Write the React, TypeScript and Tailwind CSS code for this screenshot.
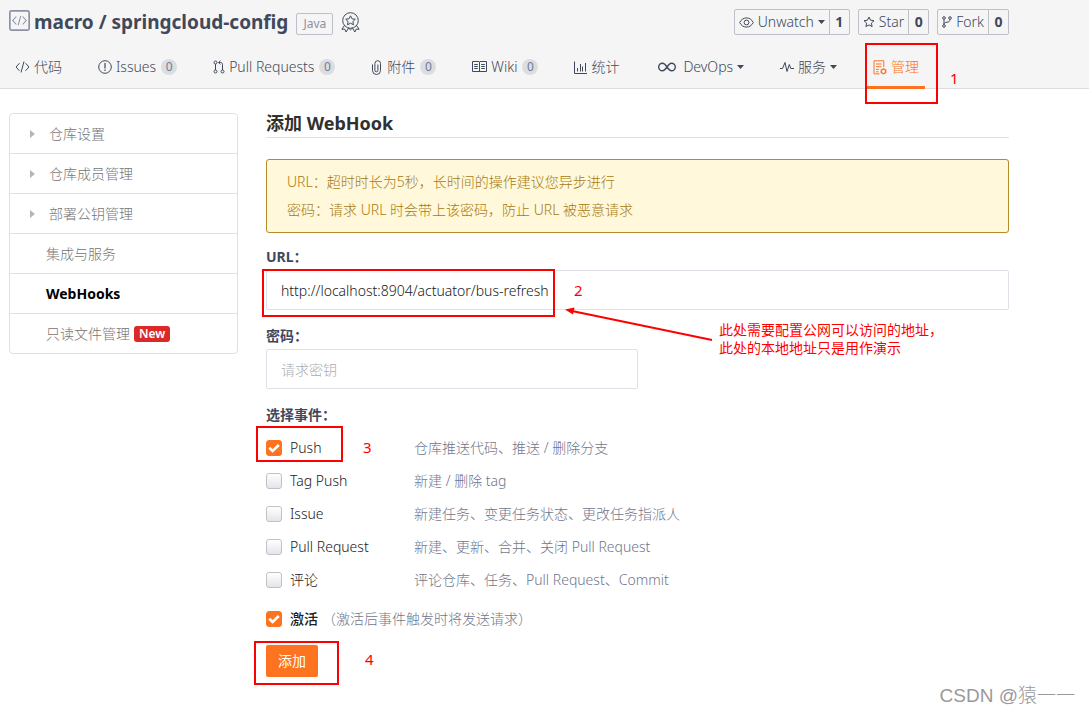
import React, { FC, ReactNode, SVGProps, useState } from "react";
import clsx from "clsx";

const Icon: FC<SVGProps<SVGSVGElement>> = ({ children, ...props }) => (
  <svg
    fill="none"
    stroke="currentColor"
    strokeWidth={1}
    aria-hidden="true"
    {...props}
  >
    {children}
  </svg>
);

const CodeIcon = () => (
  <Icon width={15} height={14} viewBox="0 0 15 14">
    <path d="M4.5 3.2 1 7l3.5 3.8M10.5 3.2 14 7l-3.5 3.8M9 1.5l-3 11" />
  </Icon>
);

const RepoIcon = () => (
  <Icon width={21} height={21} viewBox="0 0 20 20" className="-mt-1 shrink-0 text-[#8c92a4]">
    <rect x="0.8" y="0.8" width="18.4" height="18.4" rx="1.5" strokeWidth={1.6} />
    <path d="M7 6.2 3.6 10 7 13.8M13 6.2l3.4 3.8-3.4 3.8M11.2 5.5l-2.4 9" />
  </Icon>
);

const MedalIcon = () => (
  <Icon width={19} height={21} viewBox="0 0 19 21" className="shrink-0">
    <circle cx="9.5" cy="8.5" r="7.8" />
    <path d="m9.5 3.8 1.5 3 3.3.4-2.4 2.3.6 3.3-3-1.6-3 1.6.6-3.3-2.4-2.3 3.3-.4z" />
    <path d="M3.4 13.5.9 17.3l2.8-.2 1.4 2.9 2.5-4M15.6 13.5l2.5 3.8-2.8-.2-1.4 2.9-2.5-4M7.5 16l2 1.8 2-1.8" />
  </Icon>
);

const IssueIcon = () => (
  <Icon width={14} height={14} viewBox="0 0 14 14">
    <circle cx="7" cy="7" r="6.3" />
    <path d="M7 3v5.4M7 9.6V11" strokeWidth={1.2} />
  </Icon>
);

const PullIcon = () => (
  <Icon width={12} height={14} viewBox="0 0 12 14">
    <circle cx="2.5" cy="2.5" r="1.5" />
    <circle cx="2.5" cy="11.5" r="1.5" />
    <circle cx="9.5" cy="11.5" r="1.5" />
    <path d="M2.5 4v6M9.500 10V4.500c0-1.200-.7-2-1.800-2H5.500M7.500.8 5.700 2.500l1.800 1.800" />
  </Icon>
);

const ClipIcon = () => (
  <Icon width={12} height={15} viewBox="0 0 12 15">
    <path d="M1.5 4.5v6a4 4 0 0 0 8 0v-7a2.800 2.800 0 0 0-5.600 0v6.800a1.500 1.500 0 0 0 3 0V4.500" />
  </Icon>
);

const WikiIcon = () => (
  <Icon width={15} height={12} viewBox="0 0 15 12">
    <path d="M.5.5H7l.5.5.5-.5h6.500v10H8l-.5.500-.5-.500H.5zM7.500 1v10" />
    <path d="M2.200 3.500h3.600M2.200 5.500h3.600M2.200 7.500h3.600M9.200 3.500h3.600M9.200 5.500h3.600M9.200 7.500h3.600" />
  </Icon>
);

const ChartIcon = () => (
  <Icon width={13} height={13} viewBox="0 0 13 13">
    <path d="M.5.5v12H13M3.500 10.500V7M6.500 10.500V3M8.500 10.500V5.500M11.500 10.500V2" />
  </Icon>
);

const InfinityIcon = () => (
  <Icon width={24} height={10} viewBox="-3 0 24 10" strokeWidth={1.4}>
    <path d="M9 5C7.400 2.600 6.300 1.200 4.500 1.200a3.800 3.800 0 0 0 0 7.600C6.300 8.800 7.400 7.400 9 5s2.700-3.800 4.500-3.800a3.800 3.800 0 0 1 0 7.600C11.700 8.800 10.600 7.400 9 5z" />
  </Icon>
);

const PulseIcon = () => (
  <Icon width={14} height={12} viewBox="0 0 14 12">
    <path d="M0 7.500h2.500L5 1.500l2 9 2.300-7 1.500 4H14" />
  </Icon>
);

const ManageIcon = () => (
  <Icon width={14} height={15} viewBox="0 0 14 15">
    <path d="M6.500 13.900H1V.8h9.800v6.200M3 4h5.600M3 6.700h5.600M3 9.400h3M3 11.800h2.500" />
    <path d="m10.500 8.800 2.200 1.250v2.500l-2.200 1.250-2.200-1.250v-2.500z" strokeWidth={1.4} />
  </Icon>
);

const EyeIcon = () => (
  <Icon width={15} height={11} viewBox="0 0 15 11">
    <path d="M.7 5.500C2.300 2.500 4.600.9 7.500.9s5.200 1.600 6.800 4.600c-1.600 3-3.900 4.600-6.800 4.600S2.300 8.500.7 5.500z" />
    <circle cx="7.500" cy="5.500" r="2.400" />
  </Icon>
);

const StarIcon = () => (
  <Icon width={12} height={12} viewBox="0 0 12 12">
    <path d="m6 1 1.500 3.200 3.500.5-2.600 2.400.7 3.500L6 8.900l-3.100 1.700.7-3.500L1 4.700l3.500-.5z" />
  </Icon>
);

const ForkIcon = () => (
  <Icon width={10} height={12} viewBox="0 0 10 12">
    <circle cx="2" cy="2" r="1.300" />
    <circle cx="8" cy="2" r="1.300" />
    <circle cx="2" cy="10" r="1.300" />
    <path d="M2 3.300v5.400M8 3.300c0 2.400-1.200 2.600-3 2.900-1.800.2-3 .5-3 2.200" />
  </Icon>
);

const Caret = () => (
  <svg width="7" height="4" viewBox="0 0 7 4" fill="currentColor" aria-hidden="true">
    <path d="M0 0h7L3.500 4z" />
  </svg>
);

interface NavItem {
  label: string;
  icon: ReactNode;
  count?: number;
  dropdown?: boolean;
  active?: boolean;
}

const navItems: NavItem[] = [
  { label: "代码", icon: <CodeIcon /> },
  { label: "Issues", icon: <IssueIcon />, count: 0 },
  { label: "Pull Requests", icon: <PullIcon />, count: 0 },
  { label: "附件", icon: <ClipIcon />, count: 0 },
  { label: "Wiki", icon: <WikiIcon />, count: 0 },
  { label: "统计", icon: <ChartIcon /> },
  { label: "DevOps", icon: <InfinityIcon />, dropdown: true },
  { label: "服务", icon: <PulseIcon />, dropdown: true },
  { label: "管理", icon: <ManageIcon />, active: true },
];

const repoActions = [
  { label: "Unwatch", icon: <EyeIcon />, count: 1, dropdown: true },
  { label: "Star", icon: <StarIcon />, count: 0 },
  { label: "Fork", icon: <ForkIcon />, count: 0 },
];

const sideItems = [
  { label: "仓库设置", expandable: true },
  { label: "仓库成员管理", expandable: true },
  { label: "部署公钥管理", expandable: true },
  { label: "集成与服务" },
  { label: "WebHooks", active: true },
  { label: "只读文件管理", isNew: true },
];

const hookEvents = [
  { id: "push", label: "Push", desc: "仓库推送代码、推送 / 删除分支" },
  { id: "tag", label: "Tag Push", desc: "新建 / 删除 tag" },
  { id: "issue", label: "Issue", desc: "新建任务、变更任务状态、更改任务指派人" },
  { id: "pr", label: "Pull Request", desc: "新建、更新、合并、关闭 Pull Request" },
  { id: "note", label: "评论", desc: "评论仓库、任务、Pull Request、Commit" },
];

// Red frame drawn around a step, with its number beside it
const Step: FC<{ num: number; frame: string; text: string }> = ({
  num,
  frame,
  text,
}) => (
  <>
    <span
      className={clsx("pointer-events-none absolute border-2 border-[#f00]", frame)}
    />
    <span
      className={clsx(
        "pointer-events-none absolute text-[15px] leading-5 font-normal text-[#f00]",
        text,
      )}
    >
      {num}
    </span>
  </>
);

interface CheckboxProps {
  id: string;
  label: string;
  checked: boolean;
  onChange: () => void;
  strong?: boolean;
}

const Checkbox: FC<CheckboxProps> = ({ id, label, checked, onChange, strong }) => (
  <div className="flex items-center gap-2">
    <span className="relative size-4">
      <input
        id={id}
        type="checkbox"
        checked={checked}
        onChange={onChange}
        className="block size-4 appearance-none rounded-[3px] border border-[#c0c1c5] bg-linear-to-b from-white to-[#e3e5ea] checked:border-[#fe7320] checked:bg-[#fe7320] checked:bg-none"
      />
      {checked && (
        <svg
          viewBox="0 0 16 16"
          className="pointer-events-none absolute inset-0 size-4"
          fill="none"
          stroke="#fff"
          strokeWidth="2.6"
        >
          <path d="m3.3 7.8 3.3 3.2L12.800 5" />
        </svg>
      )}
    </span>
    <label htmlFor={id} className={clsx("text-[#202020]", strong && "font-medium")}>
      {label}
    </label>
  </div>
);

const Header = () => (
  <header className="border-b border-[#dcdddf] bg-[#f5f5f5] pr-20 pl-[9px]">
    <div className="flex h-11 items-center justify-between">
      <div className="flex items-center gap-1">
        <RepoIcon />
        <h1 className="mr-1 text-[19px] leading-7 font-bold whitespace-nowrap">
          <a href="#owner">macro</a> / <a href="#repo">springcloud-config</a>
        </h1>
        <a
          href="#java"
          className="mt-1 rounded-xs border border-[#bfc1ca] px-1.5 text-xs leading-5 font-normal text-[#8c92a4]"
        >
          Java
        </a>
        <span className="ml-1">
          <MedalIcon />
        </span>
      </div>
      <div className="flex gap-2">
        {repoActions.map(({ label, icon, count, dropdown }) => (
          <div
            key={label}
            className="flex h-[26px] items-stretch rounded-xs border border-[#bfc1ca]"
          >
            <button type="button" className="flex items-center gap-1 px-1">
              {icon}
              {label}
              {dropdown && <Caret />}
            </button>
            <a
              href={`#${label}`}
              className="flex w-5 items-center justify-center border-l border-[#bfc1ca] font-bold"
            >
              {count}
            </a>
          </div>
        ))}
      </div>
    </div>

    <nav className="-mb-px flex h-[45px] gap-6">
      {navItems.map(({ label, icon, count, dropdown, active }) => (
        <a
          key={label}
          href={`#${label}`}
          className={clsx(
            "relative flex items-center gap-1 border-b-3 px-1.5 pt-1 whitespace-nowrap",
            active ? "border-[#fe7320] text-[#fe7320]" : "border-transparent",
          )}
        >
          {icon}
          {label}
          {count !== undefined && (
            <span className="ml-px flex size-4 items-center justify-center rounded-full bg-[#dcdddf] text-xs font-normal text-[#6c7a9c]">
              {count}
            </span>
          )}
          {dropdown && <Caret />}
          {active && (
            <Step
              num={1}
              frame="-top-px -right-[13px] -left-0.5 h-[61px]"
              text="top-6 left-full ml-[25px]"
            />
          )}
        </a>
      ))}
    </nav>
  </header>
);

const Sidebar = () => (
  <aside className="w-[229px] shrink-0 self-start rounded-sm border border-[#dfe1e4] text-[#757575]">
    <ul className="divide-y divide-[#dfe1e4]">
      {sideItems.map(({ label, expandable, active, isNew }) => (
        <li key={label}>
          <a
            href={`#${label}`}
            className={clsx(
              "flex h-[39px] items-center",
              expandable ? "gap-3.5 pl-5" : "gap-1 pl-9",
              active && "font-bold text-black",
            )}
          >
            {expandable && (
              <svg width="5" height="8" viewBox="0 0 5 8" fill="#b5b5b5" aria-hidden="true">
                <path d="M0 0v8l5-4z" />
              </svg>
            )}
            {label}
            {isNew && (
              <span className="rounded-[3px] bg-[#db2828] px-[5px] text-xs leading-4 font-semibold text-white">
                New
              </span>
            )}
          </a>
        </li>
      ))}
    </ul>
  </aside>
);

const WebHookForm = () => {
  const [url, setUrl] = useState("http://localhost:8904/actuator/bus-refresh");
  const [password, setPassword] = useState("");
  const [events, setEvents] = useState<string[]>(["push"]);
  const [enabled, setEnabled] = useState(true);

  const toggleEvent = (id: string) =>
    setEvents((prev) =>
      prev.includes(id) ? prev.filter((item) => item !== id) : [...prev, id],
    );

  return (
    <form onSubmit={(e) => e.preventDefault()}>
      <label htmlFor="url" className="block font-bold">
        URL：
      </label>
      <div className="relative mt-[3px]">
        <input
          id="url"
          value={url}
          onChange={(e) => setUrl(e.target.value)}
          className="block h-10 w-full rounded-xs border border-[#dfe1e8] px-3.5 text-[#202020] outline-none"
        />
        <Step
          num={2}
          frame="-top-px -left-1 h-12 w-[293px]"
          text="top-2.5 left-[308px]"
        />
        <svg
          width="150"
          height="36"
          viewBox="0 0 150 36"
          className="pointer-events-none absolute top-9 left-[298px]"
          aria-hidden="true"
        >
          <path d="M148 34 8 5" stroke="#f00" strokeWidth="2" />
          <path d="m1 3.5 9.500-2L9 8.500z" fill="#f00" />
        </svg>
        <p className="pointer-events-none absolute top-[51px] left-[453px] leading-[18px] font-normal whitespace-nowrap text-[#f00]">
          此处需要配置公网可以访问的地址，
          <br />
          此处的本地地址只是用作演示
        </p>
      </div>

      <label htmlFor="password" className="mt-4 block font-bold">
        密码：
      </label>
      <input
        id="password"
        type="password"
        placeholder="请求密钥"
        value={password}
        onChange={(e) => setPassword(e.target.value)}
        className="mt-[3px] block h-10 w-1/2 rounded-xs border border-[#dfe1e8] px-3.5 outline-none placeholder:text-[#acadb2]"
      />

      <fieldset className="mt-4">
        <legend className="font-bold">选择事件：</legend>
        <div className="mt-1.5">
          {hookEvents.map(({ id, label, desc }) => (
            <div key={id} className="relative flex h-[33px] items-center">
              <div className="w-[148px] shrink-0">
                <Checkbox
                  id={id}
                  label={label}
                  checked={events.includes(id)}
                  onChange={() => toggleEvent(id)}
                />
              </div>
              <span className="text-[#6f768c]">{desc}</span>
              {id === "push" && (
                <Step
                  num={3}
                  frame="-top-[5px] -left-2.5 h-9 w-[87px]"
                  text="top-1.5 left-[97px]"
                />
              )}
            </div>
          ))}
        </div>
      </fieldset>

      <div className="mt-1.5 flex h-[33px] items-center gap-1">
        <Checkbox
          id="enabled"
          label="激活"
          checked={enabled}
          onChange={() => setEnabled(!enabled)}
          strong
        />
        <span className="text-[#6f768c]">（激活后事件触发时将发送请求）</span>
      </div>

      <div className="relative mt-2.5">
        <button
          type="submit"
          className="block h-8 rounded-xs bg-[#fe7320] px-3 font-normal text-white"
        >
          添加
        </button>
        <Step
          num={4}
          frame="-top-1 -left-3 h-11 w-[85px]"
          text="top-1 left-[99px]"
        />
      </div>
    </form>
  );
};

const App = () => (
  <div className="relative min-h-screen bg-white font-['Noto_Sans','Noto_Sans_CJK_SC',sans-serif] text-sm font-light text-[#40485b]">
    <Header />
    <div className="flex gap-7 pt-6 pr-20 pb-8 pl-[9px]">
      <Sidebar />
      <main className="min-w-0 flex-1">
        <h2 className="border-b border-[#dfe1e4] pb-1 text-lg leading-5 font-bold text-[#303030]">
          添加 WebHook
        </h2>
        <div className="mt-[21px] mb-3.5 rounded-[3px] border border-[#b58b2a] bg-[#fff8db] px-5 py-2 leading-7 text-[#a87a10]">
          <p>URL：超时时长为5秒，长时间的操作建议您异步进行</p>
          <p>密码：请求 URL 时会带上该密码，防止 URL 被恶意请求</p>
        </div>
        <WebHookForm />
      </main>
    </div>
    <span className="absolute right-3.5 bottom-1 font-['Liberation_Sans','Noto_Sans_CJK_SC',sans-serif] text-[19px] leading-7 font-light text-[#999]">
      CSDN @猿一一
    </span>
  </div>
);

export default App;
